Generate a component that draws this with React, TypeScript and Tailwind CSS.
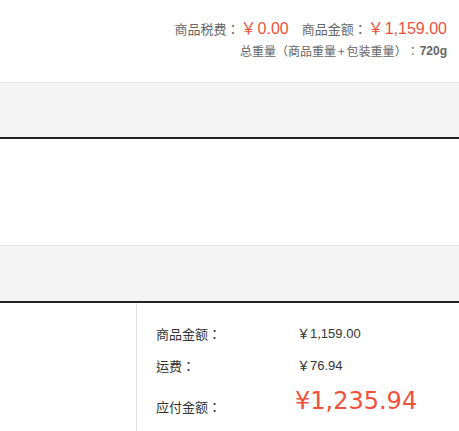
import React from 'react';

const cjk = "font-['Noto_Sans_CJK_TC','Liberation_Sans',sans-serif]";
const num = "font-['Liberation_Sans','Noto_Sans_CJK_TC',sans-serif]";
const wide = "font-['DejaVu_Sans','Noto_Sans_CJK_TC',sans-serif]";

const Price: React.FC<{ value: string }> = ({ value }) => (
  <span className="text-[16px] text-[#f0503c] ml-[1px]">
    <span className="mr-[1px]">￥</span>
    <span className={num}>{value}</span>
  </span>
);

const App: React.FC = () => {
  return (
    <div className={`w-[459px] h-[431px] overflow-hidden bg-white text-[#333] ${cjk}`}>
      {/* top summary */}
      <div className="h-[82px] pr-[12px] pt-[17px] flex flex-col items-end">
        <div className="flex items-center h-[22px] leading-none">
          <span className="text-[13px] text-[#666]">商品税费：</span>
          <Price value="0.00" />
          <span className="text-[13px] text-[#666] ml-[13px]">商品金额：</span>
          <Price value="1,159.00" />
        </div>
        <div className="mt-[1px] flex items-center h-[22px] text-[12px] text-[#666] leading-none">
          <span>总重量</span>
          <span className="inline-block w-[12px] text-center">（</span>
          <span>商品重量</span>
          <span className="mx-[2px]">+</span>
          <span>包装重量</span>
          <span className="inline-block w-[12px] text-center">）</span>
          <span>：</span>
          <span className={`font-bold ml-[1px] ${num}`}>720g</span>
        </div>
      </div>

      <div className="h-[57px] border-t border-[#e5e5e5] bg-[#f4f4f4] border-b-2 border-b-[#222]" />
      <div className="h-[106px]" />
      <div className="h-[58px] border-t border-[#e5e5e5] bg-[#f4f4f4] border-b-2 border-b-[#222]" />

      {/* totals */}
      <div className="flex h-[130px]">
        <div className="w-[137px] border-r border-[#e0e0e0]" />
        <div className="flex-1 pl-[19px] pt-[18px]">
          <div className="flex items-center h-[24px] text-[13px] leading-none">
            <span className="w-[141px]">商品金额：</span>
            <span>
              ￥<span className={num}>1,159.00</span>
            </span>
          </div>
          <div className="flex items-center h-[24px] text-[13px] mt-[8px] leading-none">
            <span className="w-[141px]">运费：</span>
            <span>
              ￥<span className={num}>76.94</span>
            </span>
          </div>
          <div className="flex items-center h-[40px] mt-[4px] leading-none">
            <span className="w-[139px] text-[13px] mt-[10px]">应付金额：</span>
            <span className={`text-[24px] text-[#f0503c] ${wide}`}>¥1,235.94</span>
          </div>
        </div>
      </div>
    </div>
  );
};

export default App;
